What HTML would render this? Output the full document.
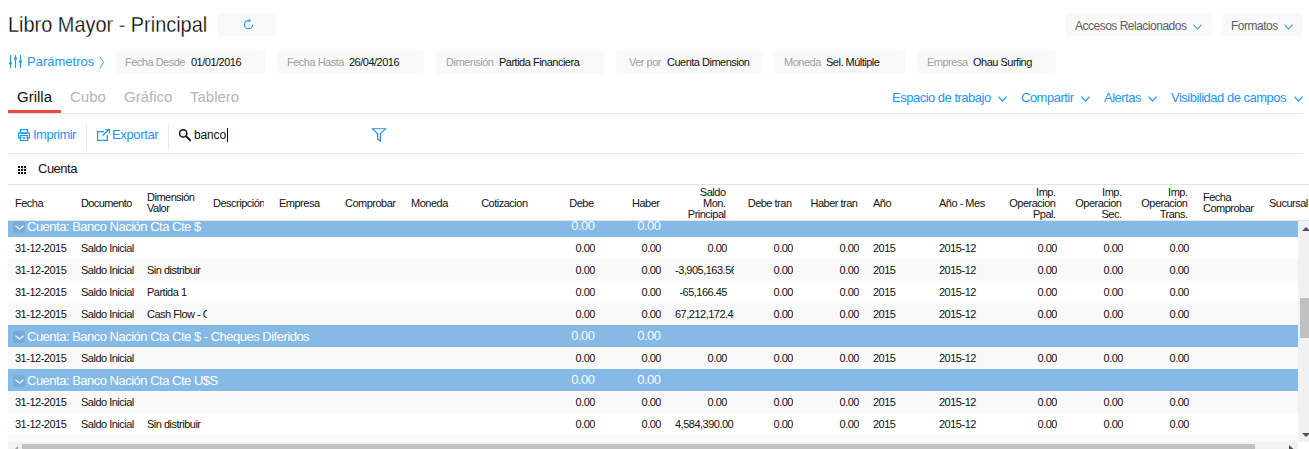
<!DOCTYPE html>
<html>
<head>
<meta charset="utf-8">
<style>
*{box-sizing:border-box;margin:0;padding:0}
html,body{width:1309px;height:449px;overflow:hidden;background:#fff}
body{font-family:"Liberation Sans",sans-serif;position:relative;color:#111;letter-spacing:-0.5px}
.abs{position:absolute;white-space:nowrap}
#title{left:8.1px;top:11.5px;font-size:22px;line-height:26px;color:#000;-webkit-text-stroke:0.3px #fff;letter-spacing:0;transform:scaleX(0.905);transform-origin:0 0}
.btn{background:#f9f9f9;border-radius:4px;height:23px;top:13px}
.btn span{position:absolute;top:0;line-height:26px;font-size:12px;color:#5e5e5e}
.pbox{background:#f9f9f9;border-radius:4px;height:24px;top:50px;font-size:11px;line-height:24px}
.pbox .l{position:absolute;color:#a0a0a0}
.pbox .v{position:absolute;color:#111}
.blue{color:#2196f3}
.tab{top:88px;font-size:15px;line-height:18px;color:#b5b5b5;letter-spacing:0}
.rlink{top:90px;font-size:13px;line-height:16px;color:#2196f3}
.hline{left:8px;width:1295px;height:1px;background:#e4e4e4}
.tb{top:127px;font-size:13px;line-height:16px;color:#2196f3}
.vsep{width:1px;background:#e6e6e6;top:124px;height:25px}
#grid{left:8px;top:185px;width:1301px;height:257px;overflow:hidden}
.hdr{position:absolute;left:0;top:0;width:1301px;height:36px;background:#fff}
.hc{position:absolute;font-size:11px;line-height:11px;color:#111;white-space:nowrap;overflow:hidden}
.hc.r{text-align:right}
.row{position:absolute;left:0;width:1290px;height:22px}
.row.alt{background:#f9f9f9}
.row.grp{background:#85b9e6;color:#fff}
.c{position:absolute;top:0;height:22px;line-height:22px;font-size:11px;white-space:nowrap;overflow:hidden;color:#111}
.c.r{text-align:right}
.grp .g{position:absolute;top:1px;line-height:22px;font-size:13px;color:#fff;white-space:nowrap}
.grp .gn{position:absolute;top:0;line-height:22px;font-size:13px;color:#f7fbfe;text-align:right}
.chev{position:absolute}
</style>
</head>
<body>
<div id="title" class="abs">Libro Mayor - Principal</div>
<div class="abs btn" style="left:217px;width:60px">
<svg style="position:absolute;left:25px;top:5px" width="13" height="13" viewBox="0 0 13 13"><path d="M6.5 2.6A4.1 4.1 0 1 0 10.6 6.7" fill="none" stroke="#2196f3" stroke-width="1.1"/><path d="M6.5 0.7L9.1 2.6L6.5 4.5Z" fill="#2196f3"/></svg>
</div>
<div class="abs btn" style="left:1065px;width:147px"><span style="left:10px">Accesos Relacionados</span>
<svg class="chev" style="left:128px;top:10.5px" width="9" height="6" viewBox="0 0 9 6"><path d="M0.5 0.7L4.5 5L8.5 0.7" fill="none" stroke="#3f95e0" stroke-width="1.05"/></svg></div>
<div class="abs btn" style="left:1222px;width:81px"><span style="left:9px">Formatos</span>
<svg class="chev" style="left:62px;top:10.5px" width="9" height="6" viewBox="0 0 9 6"><path d="M0.5 0.7L4.5 5L8.5 0.7" fill="none" stroke="#3f95e0" stroke-width="1.05"/></svg></div>

<!-- params -->
<svg class="abs" style="left:8px;top:55px" width="15" height="13" viewBox="0 0 15 13"><g stroke="#2196f3" stroke-width="1" fill="none"><path d="M2.5 0V13M7.5 0V13M12.5 0V13"/></g><g fill="#2196f3"><circle cx="2.5" cy="8.3" r="1.5"/><circle cx="7.5" cy="3.5" r="1.5"/><circle cx="12.5" cy="6.5" r="1.5"/></g></svg>
<div class="abs blue" style="left:27px;top:53px;font-size:13px;line-height:18px;letter-spacing:0">Parámetros</div>
<svg class="abs" style="left:99px;top:56px" width="6" height="13" viewBox="0 0 6 13"><path d="M0.8 0.5L4.5 6.3L0.8 12.5" fill="none" stroke="#2196f3" stroke-width="0.9"/></svg>

<div class="abs pbox" style="left:115px;width:150px"><span class="l" style="left:10px">Fecha Desde</span><span class="v" style="left:76px">01/01/2016</span></div>
<div class="abs pbox" style="left:277px;width:147px"><span class="l" style="left:10px">Fecha Hasta</span><span class="v" style="left:72px">26/04/2016</span></div>
<div class="abs pbox" style="left:436px;width:168px"><span class="l" style="left:10px">Dimensión</span><span class="v" style="left:63px">Partida Financiera</span></div>
<div class="abs pbox" style="left:616px;width:146px"><span class="l" style="left:13px">Ver por</span><span class="v" style="left:51px">Cuenta Dimension</span></div>
<div class="abs pbox" style="left:774px;width:131px"><span class="l" style="left:10px">Moneda</span><span class="v" style="left:52px">Sel. Múltiple</span></div>
<div class="abs pbox" style="left:917px;width:139px"><span class="l" style="left:10px">Empresa</span><span class="v" style="left:56px">Ohau Surfing</span></div>

<!-- tabs -->
<div class="abs tab" style="left:17px;color:#111">Grilla</div>
<div class="abs tab" style="left:70px">Cubo</div>
<div class="abs tab" style="left:124px">Gráfico</div>
<div class="abs tab" style="left:190px">Tablero</div>
<div class="abs" style="left:8px;top:110px;width:53px;height:3px;background:#e74c3c"></div>
<div class="abs hline" style="top:113px"></div>

<div class="abs rlink" style="left:892px">Espacio de trabajo</div>
<svg class="abs" style="left:998px;top:96px" width="9" height="6" viewBox="0 0 9 6"><path d="M0.5 0.7L4.5 5L8.5 0.7" fill="none" stroke="#2196f3" stroke-width="1.2"/></svg>
<div class="abs rlink" style="left:1021px">Compartir</div>
<svg class="abs" style="left:1081px;top:96px" width="9" height="6" viewBox="0 0 9 6"><path d="M0.5 0.7L4.5 5L8.5 0.7" fill="none" stroke="#2196f3" stroke-width="1.2"/></svg>
<div class="abs rlink" style="left:1104px">Alertas</div>
<svg class="abs" style="left:1148px;top:96px" width="9" height="6" viewBox="0 0 9 6"><path d="M0.5 0.7L4.5 5L8.5 0.7" fill="none" stroke="#2196f3" stroke-width="1.2"/></svg>
<div class="abs rlink" style="left:1171px">Visibilidad de campos</div>
<svg class="abs" style="left:1294px;top:96px" width="9" height="6" viewBox="0 0 9 6"><path d="M0.5 0.7L4.5 5L8.5 0.7" fill="none" stroke="#2196f3" stroke-width="1.2"/></svg>

<!-- toolbar -->
<svg class="abs" style="left:18px;top:129px" width="12" height="12" viewBox="0 0 12 12"><g fill="none" stroke="#2196f3" stroke-width="1.25"><rect x="2.5" y="0.6" width="7" height="3.5"/><rect x="0.5" y="4" width="11" height="5"/><rect x="2.5" y="6.5" width="7" height="5" fill="#fff"/></g><rect x="4.5" y="8.3" width="3" height="1.4" fill="#2196f3"/></svg>
<div class="abs tb" style="left:33px">Imprimir</div>
<div class="abs vsep" style="left:86px"></div>
<svg class="abs" style="left:97px;top:129px" width="13" height="12" viewBox="0 0 13 12"><g fill="none" stroke="#2196f3" stroke-width="1.25"><path d="M7 2.5H0.6V11.4H10.4V6"/><path d="M5.5 6.5L12 0.5M8.5 0.5H12.5V4.5"/></g></svg>
<div class="abs tb" style="left:112px;letter-spacing:-0.36px">Exportar</div>
<div class="abs vsep" style="left:168px"></div>
<svg class="abs" style="left:178px;top:128px" width="14" height="14" viewBox="0 0 14 14"><circle cx="5.2" cy="5.4" r="3.6" fill="none" stroke="#111" stroke-width="1.5"/><path d="M8 8.2L12.3 12.4" stroke="#111" stroke-width="1.8" stroke-linecap="round"/></svg>
<div class="abs" style="left:194px;top:127px;font-size:12px;line-height:16px;color:#111;letter-spacing:-0.15px">banco</div>
<div class="abs" style="left:227px;top:128px;width:1px;height:14px;background:#111"></div>
<svg class="abs" style="left:371px;top:127px" width="16" height="16" viewBox="0 0 16 16"><path d="M1.5 1.7H14.5L9.5 6.6V14.3L6.5 12V6.6Z" fill="#dce9f8" stroke="#2a8de6" stroke-width="1.15" stroke-linejoin="miter"/><path d="M3 2.4H13L8 6.8Z" fill="#fff"/></svg>
<div class="abs hline" style="top:153px"></div>

<svg class="abs" style="left:18px;top:166px" width="8" height="8" viewBox="0 0 8 8"><g fill="#111"><rect x="0" y="0" width="2" height="2"/><rect x="3" y="0" width="2" height="2"/><rect x="6" y="0" width="2" height="2"/><rect x="0" y="3" width="2" height="2"/><rect x="3" y="3" width="2" height="2"/><rect x="6" y="3" width="2" height="2"/><rect x="0" y="6" width="2" height="2"/><rect x="3" y="6" width="2" height="2"/><rect x="6" y="6" width="2" height="2"/></g></svg>
<div class="abs" style="left:38px;top:161px;font-size:13px;line-height:16px;color:#111">Cuenta</div>
<div class="abs hline" style="top:184px;width:1301px"></div>

<div id="grid" class="abs">
<div class="body" style="position:absolute;left:0;top:0;width:1290px;height:257px;overflow:hidden">
<div class="row grp" style="top:30px"><div style="position:absolute;left:5px;top:6px;width:12px;height:12px;border-radius:3px;background:#78abd8"></div><svg style="position:absolute;left:6.6px;top:9.6px" width="9" height="6" viewBox="0 0 9 6"><path d="M0.5 0.8L4.5 4.1L8.5 0.8" fill="none" stroke="#fff" stroke-width="1.15"/></svg><div class="g" style="left:19px">Cuenta: Banco Nación Cta Cte $</div><div class="gn" style="left:529px;width:57.6px">0.00</div><div class="gn" style="left:595px;width:57.6px">0.00</div></div>
<div class="row" style="top:52px"><div class="c" style="left:7px;width:60px">31-12-2015</div><div class="c" style="left:73px;width:60px">Saldo Inicial</div><div class="c r" style="left:535px;width:52px">0.00</div><div class="c r" style="left:601px;width:52px">0.00</div><div class="c r" style="left:667px;width:52px">0.00</div><div class="c r" style="left:733px;width:52px">0.00</div><div class="c r" style="left:799px;width:52px">0.00</div><div class="c" style="left:865px;width:60px">2015</div><div class="c" style="left:931px;width:60px">2015-12</div><div class="c r" style="left:997px;width:52px">0.00</div><div class="c r" style="left:1063px;width:52px">0.00</div><div class="c r" style="left:1129px;width:52px">0.00</div></div>
<div class="row alt" style="top:74px"><div class="c" style="left:7px;width:60px">31-12-2015</div><div class="c" style="left:73px;width:60px">Saldo Inicial</div><div class="c" style="left:139px;width:60px">Sin distribuir</div><div class="c r" style="left:535px;width:52px">0.00</div><div class="c r" style="left:601px;width:52px">0.00</div><div class="c" style="left:667px;width:58.7px">-3,905,163.56</div><div class="c r" style="left:733px;width:52px">0.00</div><div class="c r" style="left:799px;width:52px">0.00</div><div class="c" style="left:865px;width:60px">2015</div><div class="c" style="left:931px;width:60px">2015-12</div><div class="c r" style="left:997px;width:52px">0.00</div><div class="c r" style="left:1063px;width:52px">0.00</div><div class="c r" style="left:1129px;width:52px">0.00</div></div>
<div class="row" style="top:96px"><div class="c" style="left:7px;width:60px">31-12-2015</div><div class="c" style="left:73px;width:60px">Saldo Inicial</div><div class="c" style="left:139px;width:60px">Partida 1</div><div class="c r" style="left:535px;width:52px">0.00</div><div class="c r" style="left:601px;width:52px">0.00</div><div class="c r" style="left:667px;width:52px">-65,166.45</div><div class="c r" style="left:733px;width:52px">0.00</div><div class="c r" style="left:799px;width:52px">0.00</div><div class="c" style="left:865px;width:60px">2015</div><div class="c" style="left:931px;width:60px">2015-12</div><div class="c r" style="left:997px;width:52px">0.00</div><div class="c r" style="left:1063px;width:52px">0.00</div><div class="c r" style="left:1129px;width:52px">0.00</div></div>
<div class="row alt" style="top:118px"><div class="c" style="left:7px;width:60px">31-12-2015</div><div class="c" style="left:73px;width:60px">Saldo Inicial</div><div class="c" style="left:139px;width:60px">Cash Flow - Cobranzas</div><div class="c r" style="left:535px;width:52px">0.00</div><div class="c r" style="left:601px;width:52px">0.00</div><div class="c" style="left:667px;width:58.7px">67,212,172.45</div><div class="c r" style="left:733px;width:52px">0.00</div><div class="c r" style="left:799px;width:52px">0.00</div><div class="c" style="left:865px;width:60px">2015</div><div class="c" style="left:931px;width:60px">2015-12</div><div class="c r" style="left:997px;width:52px">0.00</div><div class="c r" style="left:1063px;width:52px">0.00</div><div class="c r" style="left:1129px;width:52px">0.00</div></div>
<div class="row grp" style="top:140px"><div style="position:absolute;left:5px;top:6px;width:12px;height:12px;border-radius:3px;background:#78abd8"></div><svg style="position:absolute;left:6.6px;top:9.6px" width="9" height="6" viewBox="0 0 9 6"><path d="M0.5 0.8L4.5 4.1L8.5 0.8" fill="none" stroke="#fff" stroke-width="1.15"/></svg><div class="g" style="left:19px">Cuenta: Banco Nación Cta Cte $ - Cheques Diferidos</div><div class="gn" style="left:529px;width:57.6px">0.00</div><div class="gn" style="left:595px;width:57.6px">0.00</div></div>
<div class="row alt" style="top:162px"><div class="c" style="left:7px;width:60px">31-12-2015</div><div class="c" style="left:73px;width:60px">Saldo Inicial</div><div class="c r" style="left:535px;width:52px">0.00</div><div class="c r" style="left:601px;width:52px">0.00</div><div class="c r" style="left:667px;width:52px">0.00</div><div class="c r" style="left:733px;width:52px">0.00</div><div class="c r" style="left:799px;width:52px">0.00</div><div class="c" style="left:865px;width:60px">2015</div><div class="c" style="left:931px;width:60px">2015-12</div><div class="c r" style="left:997px;width:52px">0.00</div><div class="c r" style="left:1063px;width:52px">0.00</div><div class="c r" style="left:1129px;width:52px">0.00</div></div>
<div class="row grp" style="top:184px"><div style="position:absolute;left:5px;top:6px;width:12px;height:12px;border-radius:3px;background:#78abd8"></div><svg style="position:absolute;left:6.6px;top:9.6px" width="9" height="6" viewBox="0 0 9 6"><path d="M0.5 0.8L4.5 4.1L8.5 0.8" fill="none" stroke="#fff" stroke-width="1.15"/></svg><div class="g" style="left:19px">Cuenta: Banco Nación Cta Cte U$S</div><div class="gn" style="left:529px;width:57.6px">0.00</div><div class="gn" style="left:595px;width:57.6px">0.00</div></div>
<div class="row alt" style="top:206px"><div class="c" style="left:7px;width:60px">31-12-2015</div><div class="c" style="left:73px;width:60px">Saldo Inicial</div><div class="c r" style="left:535px;width:52px">0.00</div><div class="c r" style="left:601px;width:52px">0.00</div><div class="c r" style="left:667px;width:52px">0.00</div><div class="c r" style="left:733px;width:52px">0.00</div><div class="c r" style="left:799px;width:52px">0.00</div><div class="c" style="left:865px;width:60px">2015</div><div class="c" style="left:931px;width:60px">2015-12</div><div class="c r" style="left:997px;width:52px">0.00</div><div class="c r" style="left:1063px;width:52px">0.00</div><div class="c r" style="left:1129px;width:52px">0.00</div></div>
<div class="row" style="top:228px"><div class="c" style="left:7px;width:60px">31-12-2015</div><div class="c" style="left:73px;width:60px">Saldo Inicial</div><div class="c" style="left:139px;width:60px">Sin distribuir</div><div class="c r" style="left:535px;width:52px">0.00</div><div class="c r" style="left:601px;width:52px">0.00</div><div class="c" style="left:667px;width:58.7px">4,584,390.00</div><div class="c r" style="left:733px;width:52px">0.00</div><div class="c r" style="left:799px;width:52px">0.00</div><div class="c" style="left:865px;width:60px">2015</div><div class="c" style="left:931px;width:60px">2015-12</div><div class="c r" style="left:997px;width:52px">0.00</div><div class="c r" style="left:1063px;width:52px">0.00</div><div class="c r" style="left:1129px;width:52px">0.00</div></div>
<div class="row alt" style="top:250px"><div class="c" style="left:7px;width:60px">31-12-2015</div><div class="c" style="left:73px;width:60px">Saldo Inicial</div><div class="c r" style="left:535px;width:52px">0.00</div><div class="c r" style="left:601px;width:52px">0.00</div><div class="c r" style="left:733px;width:52px">0.00</div><div class="c r" style="left:799px;width:52px">0.00</div><div class="c" style="left:865px;width:60px">2015</div><div class="c" style="left:931px;width:60px">2015-12</div><div class="c r" style="left:997px;width:52px">0.00</div><div class="c r" style="left:1063px;width:52px">0.00</div><div class="c r" style="left:1129px;width:52px">0.00</div></div>
</div>
<div class="hdr">
<div class="hc" style="left:7px;top:12.5px;width:51px">Fecha</div>
<div class="hc" style="left:73px;top:12.5px;width:51px"><span style="letter-spacing:-0.62px">Documento</span></div>
<div class="hc" style="left:139px;top:7.0px;width:51px">Dimensión<br>Valor</div>
<div class="hc" style="left:205px;top:12.5px;width:51px">Descripción</div>
<div class="hc" style="left:271px;top:12.5px;width:51px">Empresa</div>
<div class="hc" style="left:337px;top:12.5px;width:51px">Comprobante</div>
<div class="hc" style="left:403px;top:12.5px;width:51px">Moneda</div>
<div class="hc r" style="left:463px;top:12.5px;width:56.5px">Cotizacion</div>
<div class="hc r" style="left:529px;top:12.5px;width:56.5px">Debe</div>
<div class="hc r" style="left:595px;top:12.5px;width:56.5px">Haber</div>
<div class="hc r" style="left:661px;top:1.5px;width:56.5px">Saldo<br>Mon.<br>Principal</div>
<div class="hc r" style="left:727px;top:12.5px;width:56.5px">Debe tran</div>
<div class="hc r" style="left:793px;top:12.5px;width:56.5px">Haber tran</div>
<div class="hc" style="left:865px;top:12.5px;width:51px">Año</div>
<div class="hc" style="left:931px;top:12.5px;width:51px">Año - Mes</div>
<div class="hc r" style="left:991px;top:1.5px;width:56.5px">Imp.<br>Operacion<br>Ppal.</div>
<div class="hc r" style="left:1057px;top:1.5px;width:56.5px">Imp.<br>Operacion<br>Sec.</div>
<div class="hc r" style="left:1123px;top:1.5px;width:56.5px">Imp.<br>Operacion<br>Trans.</div>
<div class="hc" style="left:1195px;top:7.0px;width:51px">Fecha<br>Comprobante</div>
<div class="hc" style="left:1261px;top:12.5px;width:51px">Sucursal</div>
<div style="position:absolute;left:0;top:35px;width:1301px;height:1px;background:#e2e2e2"></div>
</div>
</div>

<!-- scrollbars -->
<div class="abs" style="left:1298px;top:221px;width:15px;height:221px;background:#f1f1f1"></div>
<div class="abs" style="left:1300px;top:298px;width:11px;height:40px;background:#c1c1c1"></div>
<svg class="abs" style="left:1301.5px;top:226.7px" width="8" height="4" viewBox="0 0 8 4"><path d="M0 4L4 0L8 4Z" fill="#505050"/></svg>
<svg class="abs" style="left:1301.5px;top:432.7px" width="8" height="4" viewBox="0 0 8 4"><path d="M0 0L4 4L8 0Z" fill="#505050"/></svg>
<div class="abs" style="left:8px;top:442px;width:1290px;height:15px;background:#f1f1f1"></div>
<div class="abs" style="left:22px;top:444px;width:1233px;height:11px;background:#c1c1c1"></div>
<svg class="abs" style="left:13.5px;top:445.5px" width="4" height="8" viewBox="0 0 4 8"><path d="M4 0L0 4L4 8Z" fill="#a3a3a3"/></svg>
<svg class="abs" style="left:1289px;top:445px" width="5" height="9" viewBox="0 0 5 9"><path d="M0 0L5 4.5L0 9Z" fill="#505050"/></svg>
</body>
</html>
